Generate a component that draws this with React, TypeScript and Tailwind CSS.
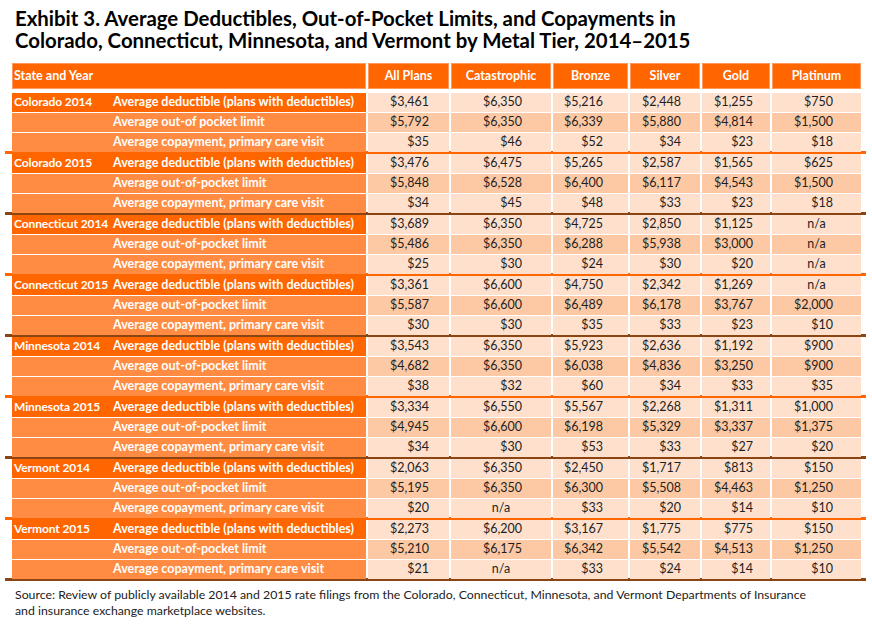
const groups = [
  {
    state: "Colorado 2014",
    oopLabel: "Average out-of pocket limit",
    ded: ["$3,461", "$6,350", "$5,216", "$2,448", "$1,255", "$750"],
    oop: ["$5,792", "$6,350", "$6,339", "$5,880", "$4,814", "$1,500"],
    copay: ["$35", "$46", "$52", "$34", "$23", "$18"],
    line: "orange",
  },
  {
    state: "Colorado 2015",
    ded: ["$3,476", "$6,475", "$5,265", "$2,587", "$1,565", "$625"],
    oop: ["$5,848", "$6,528", "$6,400", "$6,117", "$4,543", "$1,500"],
    copay: ["$34", "$45", "$48", "$33", "$23", "$18"],
    line: "brown",
  },
  {
    state: "Connecticut 2014",
    ded: ["$3,689", "$6,350", "$4,725", "$2,850", "$1,125", "n/a"],
    oop: ["$5,486", "$6,350", "$6,288", "$5,938", "$3,000", "n/a"],
    copay: ["$25", "$30", "$24", "$30", "$20", "n/a"],
    line: "orange",
  },
  {
    state: "Connecticut 2015",
    ded: ["$3,361", "$6,600", "$4,750", "$2,342", "$1,269", "n/a"],
    oop: ["$5,587", "$6,600", "$6,489", "$6,178", "$3,767", "$2,000"],
    copay: ["$30", "$30", "$35", "$33", "$23", "$10"],
    line: "brown",
  },
  {
    state: "Minnesota 2014",
    ded: ["$3,543", "$6,350", "$5,923", "$2,636", "$1,192", "$900"],
    oop: ["$4,682", "$6,350", "$6,038", "$4,836", "$3,250", "$900"],
    copay: ["$38", "$32", "$60", "$34", "$33", "$35"],
    line: "orange",
  },
  {
    state: "Minnesota 2015",
    ded: ["$3,334", "$6,550", "$5,567", "$2,268", "$1,311", "$1,000"],
    oop: ["$4,945", "$6,600", "$6,198", "$5,329", "$3,337", "$1,375"],
    copay: ["$34", "$30", "$53", "$33", "$27", "$20"],
    line: "brown",
  },
  {
    state: "Vermont 2014",
    ded: ["$2,063", "$6,350", "$2,450", "$1,717", "$813", "$150"],
    oop: ["$5,195", "$6,350", "$6,300", "$5,508", "$4,463", "$1,250"],
    copay: ["$20", "n/a", "$33", "$20", "$14", "$10"],
    line: "orange",
  },
  {
    state: "Vermont 2015",
    ded: ["$2,273", "$6,200", "$3,167", "$1,775", "$775", "$150"],
    oop: ["$5,210", "$6,175", "$6,342", "$5,542", "$4,513", "$1,250"],
    copay: ["$21", "n/a", "$33", "$24", "$14", "$10"],
    line: "brown",
  },
];

const headers = ["All Plans", "Catastrophic", "Bronze", "Silver", "Gold", "Platinum"];
// right padding per value column, numbers sit right-aligned like the sheet
const padRight = ["pr-[20px]", "pr-[29px]", "pr-[25px]", "pr-[19px]", "pr-[17px]", "pr-[28px]"];

const gridCols = "grid grid-cols-[354px_81px_100px_75px_70px_68px_89px] gap-x-[2px]";

function Row({
  state,
  label,
  values,
  kind,
}: {
  state?: string;
  label: string;
  values: string[];
  kind: "ded" | "oop" | "copay";
}) {
  const labelBg = kind === "ded" ? "bg-[#ff6600]" : "bg-[#ff8c42]";
  const valueBg = kind === "oop" ? "bg-[#fdc9a4]" : "bg-[#fee0cd]";

  return (
    <div className={`${gridCols} h-[18px]`}>
      <div className={`${labelBg} flex items-center text-white font-bold text-[12.5px] pl-[2px]`}>
        <span className="w-[99px] shrink-0 whitespace-nowrap text-[12px] tracking-[-0.1px]">{state}</span>
        <span className="whitespace-nowrap">{label}</span>
      </div>
      {values.map((v, i) => (
        <div
          key={i}
          className={`${valueBg} flex items-center text-[12.5px] text-[#1f1f1f] ${
            v === "n/a" ? "justify-center" : `justify-end ${padRight[i]}`
          }`}
        >
          {v}
        </div>
      ))}
    </div>
  );
}

export default function App() {
  return (
    <div className="w-[872px] h-[626px] bg-white overflow-hidden font-['Lato','Liberation_Sans',sans-serif] text-[#1a1a1a]">
      <h1 className="pt-[7px] pl-[15px] text-[20.4px] leading-[22px] font-bold text-black">
        Exhibit 3. Average Deductibles, Out-of-Pocket Limits, and Copayments in
        <br />
        Colorado, Connecticut, Minnesota, and Vermont by Metal Tier, 2014–2015
      </h1>

      <div className="ml-[12px] mt-[12px]">
        {/* header */}
        <div className={`${gridCols} h-[26px]`}>
          <div className="bg-[#ff6600] border border-[#ff9a5c] flex items-center pl-[1px] text-white font-bold text-[12.5px]">
            State and Year
          </div>
          {headers.map((h) => (
            <div
              key={h}
              className="bg-[#ff6600] border border-[#ff9a5c] flex items-center justify-center text-white font-bold text-[12.5px]"
            >
              {h}
            </div>
          ))}
        </div>

        <div className="h-[4px]" />

        {groups.map((g) => (
          <div key={g.state}>
            <div className="flex flex-col gap-[2px]">
              <Row
                state={g.state}
                label="Average deductible (plans with deductibles)"
                values={g.ded}
                kind="ded"
              />
              <Row label={g.oopLabel ?? "Average out-of-pocket limit"} values={g.oop} kind="oop" />
              <Row label="Average copayment, primary care visit" values={g.copay} kind="copay" />
            </div>
            <div
              className={`h-[3px] -ml-[7px] w-[861px] ${
                g.line === "orange" ? "bg-[#ff6600]" : "bg-[#8b4513]"
              }`}
            />
          </div>
        ))}
      </div>

      <p className="mt-[6px] pl-[15px] text-[12.3px] leading-[16px] text-[#222]">
        Source: Review of publicly available 2014 and 2015 rate filings from the Colorado, Connecticut, Minnesota, and Vermont Departments of Insurance
        <br />
        and insurance exchange marketplace websites.
      </p>
    </div>
  );
}
